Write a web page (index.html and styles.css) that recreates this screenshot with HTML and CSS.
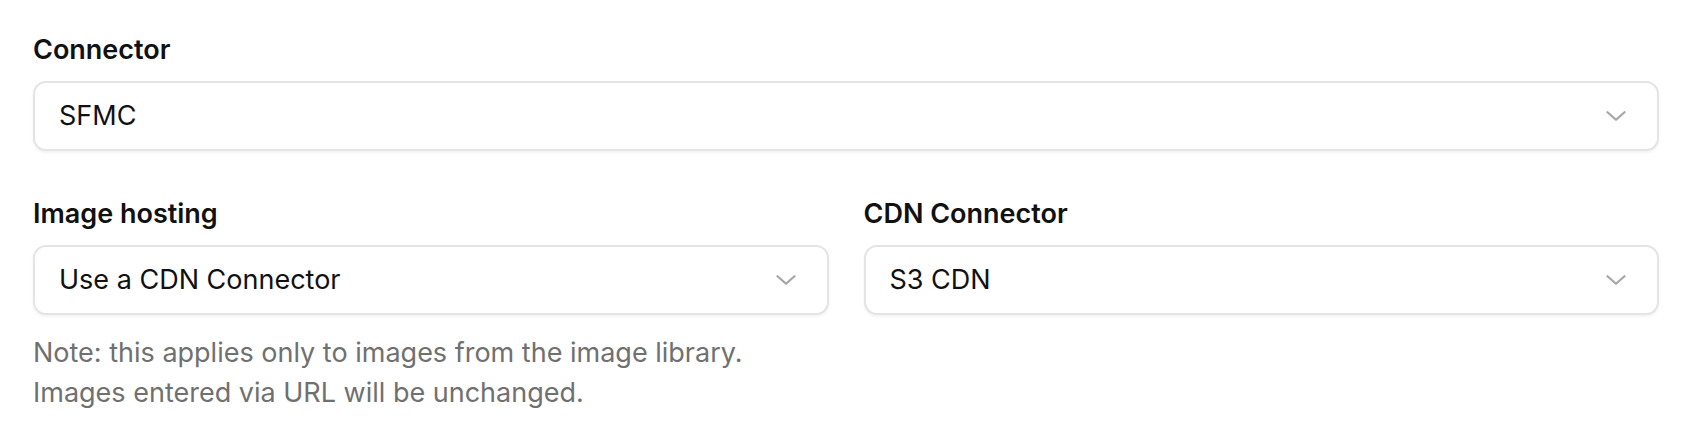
FILE: index.html
```html
<!DOCTYPE html>
<html>
<head>
<meta charset="utf-8">
<link rel="stylesheet" href="styles.css">
</head>
<body>
<div class="form">
  <div class="field">
    <label class="label">Connector</label>
    <div class="select"><span class="value">SFMC</span><svg class="chev" viewBox="0 0 20 10"><path d="M1.5 1.2 L10 8.8 L18.5 1.2"/></svg></div>
  </div>
  <div class="row">
    <div class="field">
      <label class="label">Image hosting</label>
      <div class="select"><span class="value">Use a CDN Connector</span><svg class="chev" viewBox="0 0 20 10"><path d="M1.5 1.2 L10 8.8 L18.5 1.2"/></svg></div>
    </div>
    <div class="field">
      <label class="label">CDN Connector</label>
      <div class="select"><span class="value">S3 CDN</span><svg class="chev" viewBox="0 0 20 10"><path d="M1.5 1.2 L10 8.8 L18.5 1.2"/></svg></div>
    </div>
  </div>
  <p class="note">Note: this applies only to images from the image library.<br>Images entered via URL will be unchanged.</p>
</div>
</body>
</html>
```
FILE: styles.css
```css
* { box-sizing: border-box; }
body { margin: 0; background: #fff; font-family: "Inter", "Liberation Sans", sans-serif; color: #111; }
.form { padding: 34px 35px 0 33px; }
.field { display: flex; flex-direction: column; }
.label { font-size: 27px; font-weight: 600; line-height: 32px; margin-bottom: 15px; color: #111; }
.select { height: 70px; border: 2px solid #e4e4e4; border-radius: 13px; box-shadow: 0 2px 3px rgba(0,0,0,0.05); display: flex; align-items: center; justify-content: space-between; padding: 0 31px 0 24px; background: #fff; }
.value { font-size: 27px; line-height: 32px; color: #111; }
.chev { width: 20px; height: 10px; fill: none; stroke: #a6a6a6; stroke-width: 2.2; stroke-linecap: round; stroke-linejoin: round; }
.row { display: grid; grid-template-columns: 1fr 1fr; gap: 35px; margin-top: 47px; }
.note { margin: 18px 0 0; font-size: 27px; line-height: 40px; color: #707070; }
```
